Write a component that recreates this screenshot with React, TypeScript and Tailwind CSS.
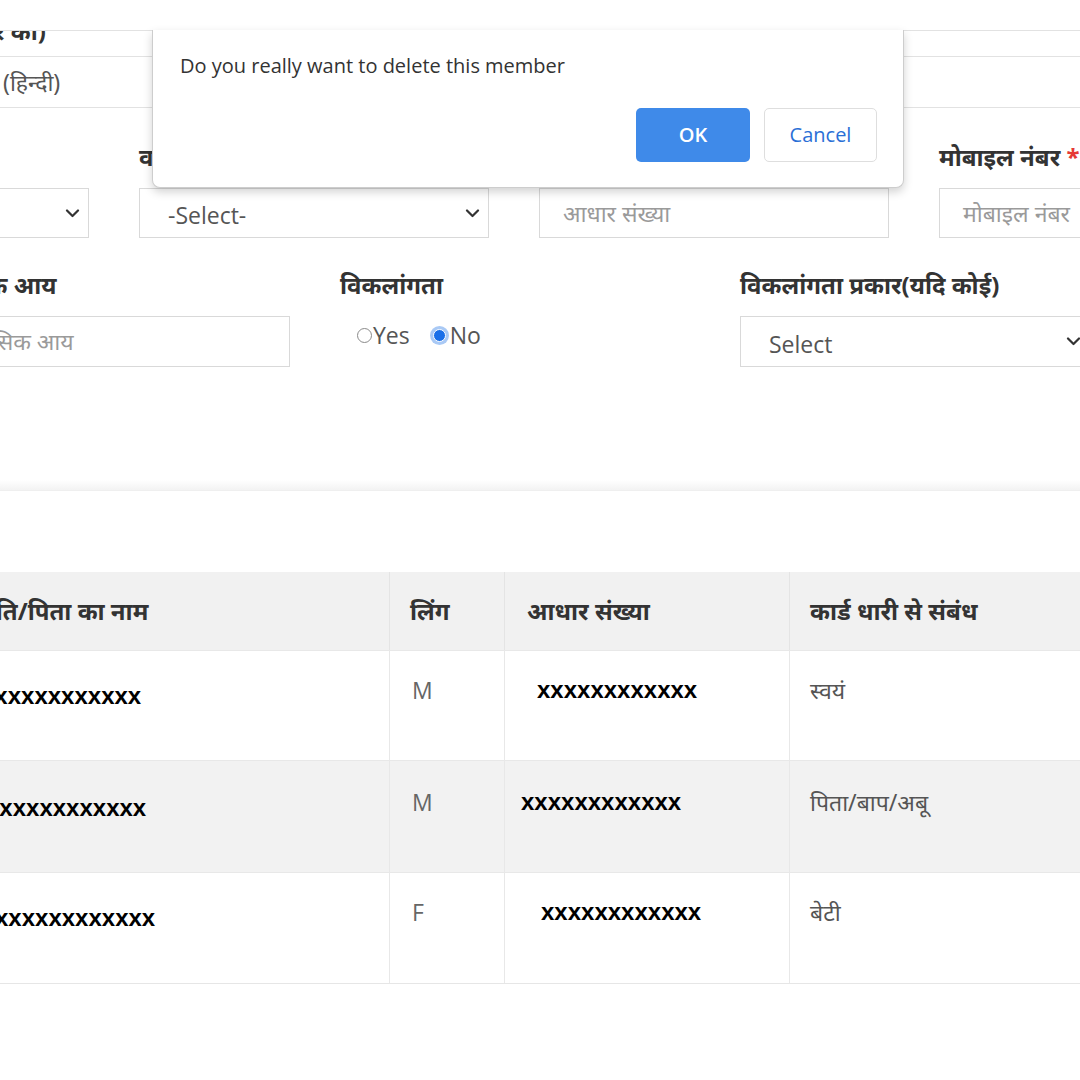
import React from "react";

const latin = "font-['Open_Sans','Noto_Sans',sans-serif]";

const Chevron = () => (
  <svg width="15" height="9" viewBox="0 0 15 9" fill="none" stroke="#333" strokeWidth="2.2" strokeLinecap="round" strokeLinejoin="round" className="shrink-0">
    <path d="M2 1.5l5.5 5.5 5.5-5.5" />
  </svg>
);

const Label = ({ children }: { children?: React.ReactNode }) => (
  <div className="h-[34px] mb-[14px] leading-[34px] text-[24px] font-bold text-[#333] whitespace-nowrap">{children}</div>
);

const SelectBox = ({ text, h = "h-[50px]" }: { text?: string; h?: string }) => (
  <div className={`${h} border border-[#d9d9d9] bg-white flex items-center justify-between pl-[28px] pr-[8px] text-[23px] text-[#555]`}>
    <span className={`${latin} pt-[5px]`}>{text}</span>
    <Chevron />
  </div>
);

const InputBox = ({ placeholder, h = "h-[50px]", pl = "pl-[23px]" }: { placeholder: string; h?: string; pl?: string }) => (
  <div className={`${h} border border-[#d9d9d9] bg-white flex items-center ${pl} text-[23px] text-[#9a9a9a] whitespace-nowrap overflow-hidden`}>
    {placeholder}
  </div>
);

const rows = [
  { name: "xxxxxxxxxxxx", nameMl: "-ml-[19px]", g: "M", aadhar: "xxxxxxxxxxxx", aPl: "pl-[32px]", rel: "स्वयं", bg: "bg-white", h: "h-[110px]", pt: "pt-[24px]" },
  { name: "xxxxxxxxxxxx", nameMl: "-ml-[14px]", g: "M", aadhar: "xxxxxxxxxxxx", aPl: "pl-[16px]", rel: "पिता/बाप/अबू", bg: "bg-[#f2f2f2]", h: "h-[112px]", pt: "pt-[26px]" },
  { name: "xxxxxxxxxxxx", nameMl: "-ml-[5px]", g: "F", aadhar: "xxxxxxxxxxxx", aPl: "pl-[36px]", rel: "बेटी", bg: "bg-white", h: "h-[111px]", pt: "pt-[24px]" },
];

export default function App() {
  return (
    <div className="relative w-[1080px] h-[1080px] overflow-hidden bg-white font-['Noto_Sans','Open_Sans',sans-serif] text-[#333]">
      {/* top strip of table */}
      <div className="mt-[30px]">
        <div className="h-[27px] border-t border-b border-[#e2e2e2] overflow-hidden">
          <div className="-mt-[17px] -ml-[6px] text-[24px] font-bold text-[#333] leading-[34px]">र की)</div>
        </div>
        <div className="h-[51px] border-b border-[#e2e2e2] flex items-center pl-[3px] text-[23px] text-[#555]">(हिन्दी)</div>
      </div>

      {/* form row 2 */}
      <div className="mt-[32px] -ml-[261px] flex gap-[50px]">
        <div className="w-[350px] shrink-0">
          <Label>लिंग</Label>
          <SelectBox />
        </div>
        <div className="w-[350px] shrink-0">
          <Label>वर्ग</Label>
          <SelectBox text="-Select-" />
        </div>
        <div className="w-[350px] shrink-0">
          <Label>आधार संख्या</Label>
          <InputBox placeholder="आधार संख्या" />
        </div>
        <div className="w-[350px] shrink-0">
          <Label>
            मोबाइल नंबर <span className="text-[#e53935]">*</span>
          </Label>
          <InputBox placeholder="मोबाइल नंबर" />
        </div>
      </div>

      {/* form row 3 */}
      <div className="mt-[30px] -ml-[60px] flex gap-[50px]">
        <div className="w-[350px] shrink-0">
          <Label>मासिक आय</Label>
          <InputBox placeholder="मासिक आय" h="h-[51px]" pl="pl-[31px]" />
        </div>
        <div className="w-[350px] shrink-0">
          <Label>विकलांगता</Label>
          <div className={`h-[51px] pt-[2px] pl-[17px] flex items-start gap-[20px] text-[23px] text-[#555] ${latin}`}>
            <label className="flex items-center h-[34px]">
              <span className="shrink-0 w-[15px] h-[15px] rounded-full border-[1.5px] border-[#8a8a8a] bg-white mr-[1px]" />
              Yes
            </label>
            <label className="flex items-center h-[34px]">
              <span className="shrink-0 w-[19px] h-[19px] rounded-full bg-[#a9c9f5] flex items-center justify-center mr-[1px]">
                <span className="w-[13px] h-[13px] rounded-full bg-[#1a6fe8] border-[1.5px] border-white" />
              </span>
              No
            </label>
          </div>
        </div>
        <div className="w-[350px] shrink-0">
          <Label>विकलांगता प्रकार(यदि कोई)</Label>
          <SelectBox text="Select" h="h-[51px]" />
        </div>
      </div>

      {/* section divider */}
      <div className="mt-[113px] h-[11px] bg-gradient-to-b from-white to-[#f3f3f3] border-b border-[#efefef]" />

      {/* members table */}
      <div className="mt-[81px] border-b border-[#e6e6e6]">
        <div className="grid grid-cols-[390px_115px_285px_290px] h-[78px] bg-[#f1f1f1] text-[24px] font-bold text-[#333]">
          <div className="flex items-center border-r border-[#e4e4e4] overflow-hidden whitespace-nowrap">
            <span className="-ml-[19px]">पति/पिता का नाम</span>
          </div>
          <div className="flex items-center pl-[20px] border-r border-[#e4e4e4]">लिंग</div>
          <div className="flex items-center pl-[22px] border-r border-[#e4e4e4]">आधार संख्या</div>
          <div className="flex items-center pl-[20px]">कार्ड धारी से संबंध</div>
        </div>
        {rows.map((r, i) => (
          <div key={i} className={`grid grid-cols-[390px_115px_285px_290px] ${r.h} ${r.bg} border-t border-[#e8e8e8]`}>
            <div className={`${r.pt} border-r border-[#e8e8e8] overflow-hidden whitespace-nowrap`}>
              <span className={`block ${r.nameMl} mt-[6px] font-['Liberation_Sans',Arial,sans-serif] font-bold text-[24px] text-black leading-[30px]`}>{r.name}</span>
            </div>
            <div className={`${r.pt} pl-[22px] border-r border-[#e8e8e8] text-[23px] text-[#666] leading-[30px] ${latin}`}>{r.g}</div>
            <div className={`${r.pt} ${r.aPl} border-r border-[#e8e8e8]`}>
              <span className="block font-['Liberation_Sans',Arial,sans-serif] font-bold text-[24px] text-black leading-[30px]">{r.aadhar}</span>
            </div>
            <div className={`${r.pt} pl-[20px] text-[23px] text-[#555] leading-[30px]`}>{r.rel}</div>
          </div>
        ))}
      </div>

      {/* confirm dialog */}
      <div className="absolute left-[152px] top-[30px] w-[752px] h-[158px] bg-white border border-t-0 border-[#cdcdcd] rounded-b-[8px] shadow-[0_4px_10px_rgba(0,0,0,0.18)]">
        <div className={`pl-[27px] pt-[22px] text-[20px] leading-[28px] text-[#333] ${latin}`}>Do you really want to delete this member</div>
        <div className="absolute right-[26px] top-[78px] flex gap-[14px]">
          <button className={`w-[114px] h-[54px] rounded-[5px] bg-[#3f8ae9] text-white text-[20px] font-semibold ${latin}`}>OK</button>
          <button className={`w-[113px] h-[54px] rounded-[5px] bg-white border border-[#dedede] text-[#2a6fd6] text-[20px] ${latin}`}>Cancel</button>
        </div>
      </div>
    </div>
  );
}
